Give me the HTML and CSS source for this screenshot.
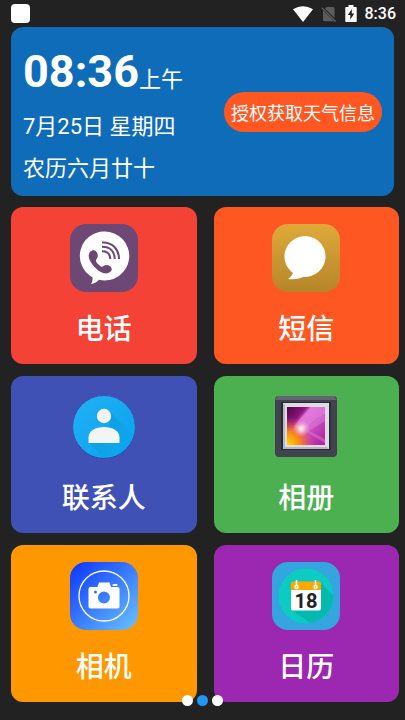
FILE: index.html
```html
<!DOCTYPE html>
<html lang="zh-CN">
<head>
<meta charset="utf-8">
<meta name="viewport" content="width=device-width, initial-scale=1">
<title>桌面</title>
<link rel="stylesheet" href="styles.css">
</head>
<body>
<header class="status">
  <span class="notice"></span>
  <div class="signals">
    <svg width="20" height="16" viewBox="0 0 20 16"><path d="M0 3.2Q10-2.6 20 3.2L10 16Z" fill="#fff"/></svg>
    <svg width="16" height="16" viewBox="0 0 16 16"><path d="M5.5 1H12a1.5 1.5 0 0 1 1.5 1.5V12L3.8 2.6ZM2 4.5 13 15.3H3.5A1.5 1.5 0 0 1 2 13.8Z" fill="#5c5c5c"/><path d="M.8 1.8 14.6 15.6" stroke="#5c5c5c" stroke-width="1.4"/></svg>
    <svg width="12" height="17" viewBox="0 0 12 17"><path d="M3.5 0h5v2H11a.7.7 0 0 1 .7.7v13.6a.7.7 0 0 1-.7.7H1a.7.7 0 0 1-.7-.7V2.700A.7.7 0 0 1 1 2h2.500Z" fill="#fff"/><path d="M6.800 4 2.800 10h2.500v4.500L9.300 8.500H6.800Z" fill="#222"/></svg>
    <span class="clock">8:36</span>
  </div>
</header>
<main>
  <section class="summary">
    <div class="date">
      <div class="time"><strong>08:36</strong>上午</div>
      <div>7月25日 星期四</div>
      <div>农历六月廿十</div>
    </div>
    <button class="weather" type="button">授权获取天气信息</button>
  </section>
  <nav class="apps">
    <button class="app phone" type="button">
      <svg class="icon" viewBox="0 0 68 68"><rect width="68" height="68" rx="16" fill="#6d4875"/><path d="M34 7.500a24.500 24.500 0 1 1-5 48.300C27 58 24.500 59.500 21 60c1.300-2 1.700-4 1.600-6.500A24.500 24.500 0 0 1 34 7.500Z" fill="#fff"/><path d="M20.500 27.500c2-1.800 4.700-1.500 6.200.6 1.400 2.300 1.600 5-.1 7-1.300 1.500-.5 3 1.400 5 2 2.200 3.800 3.300 5.500 2 2.300-1.800 5.700-1 7.500 1.200 1.300 1.800.8 3.500-.8 4.700-4.500 3.300-11 .3-15.700-5-4.700-5.200-8-11.300-4-15.500Z" fill="#6d4875"/><g fill="none" stroke="#6d4875" stroke-width="2"><path d="M32 18.500c10-.5 17 6.500 17 16.500"/><path d="M32 22.800c8 0 12.700 4.500 12.700 12.200"/><path d="M32 27.300c5 0 8.200 2.700 8.300 7.700"/></g></svg>
      <span>电话</span>
    </button>
    <button class="app sms" type="button">
      <svg class="icon" viewBox="0 0 68 68"><defs><linearGradient id="gold" x2="0" y2="1"><stop stop-color="#dfa93a"/><stop offset="1" stop-color="#b68529"/></linearGradient></defs><rect width="68" height="68" rx="16" fill="url(#gold)"/><path d="M34 12a21 20.500 0 1 1-3 41c-4 2-9 2.500-15 2 2-1.500 4-3.500 5-6A21 20.500 0 0 1 34 12Z" fill="#fff"/></svg>
      <span>短信</span>
    </button>
    <button class="app contacts" type="button">
      <svg class="icon" viewBox="0 0 68 68"><defs><clipPath id="disc"><circle cx="34" cy="34" r="31"/></clipPath><linearGradient id="sky" x2="1" y2="1"><stop stop-color="#22b0f4"/><stop offset="1" stop-color="#08a3ec"/></linearGradient><linearGradient id="fade" x2="1" y2="1"><stop stop-color="#0279b8" stop-opacity=".4"/><stop offset=".7" stop-color="#0279b8" stop-opacity="0"/></linearGradient></defs><circle cx="34" cy="34.600" r="31" fill="#2a3a8b"/><circle cx="34" cy="34" r="31" fill="url(#sky)"/><path clip-path="url(#disc)" d="m39 18 28 28v22H37L19 50h27l-7-18Z" fill="url(#fade)"/><circle cx="34" cy="23" r="7.200" fill="#f2f4f5"/><path d="M18.500 50v-5.500c0-6.500 7-10.500 15.500-10.500s15.500 4 15.500 10.500V50Z" fill="#f2f4f5"/></svg>
      <span>联系人</span>
    </button>
    <button class="app album" type="button">
      <svg class="icon" viewBox="0 0 68 68"><defs><linearGradient id="photo" x2="1" y2=".8"><stop stop-color="#4c0647"/><stop offset=".3" stop-color="#8c147c"/><stop offset=".42" stop-color="#e36cc9"/><stop offset=".65" stop-color="#c652c6"/><stop offset="1" stop-color="#b7269d"/></linearGradient><radialGradient id="sun" cx="0" cy="1" r=".75"><stop stop-color="#ffd900"/><stop offset=".45" stop-color="#f78b13"/><stop offset="1" stop-color="#f0357a" stop-opacity="0"/></radialGradient><radialGradient id="glow" cx=".38" cy=".57" r=".22"><stop stop-color="#fff"/><stop offset="1" stop-color="#ffc4d8" stop-opacity="0"/></radialGradient></defs><rect x="3" y="3" width="62" height="61" rx="4" fill="#40424d"/><path d="M6 3h56l3 4H3Z" fill="#636570"/><path d="M9 9h50v48H9Z" fill="#292b34"/><rect x="11" y="10" width="46" height="46" fill="#dddce2"/><path d="M11 56V10l2 2v42h42l2 2Z" fill="#b7b7c0"/><rect x="15" y="14" width="38" height="38" fill="url(#photo)"/><path d="M38 14h15v6C43 27 38 30 35 36c-3-3-9-2-14 2 3-10 10-15 17-24Z" fill="#e17bdc" opacity=".8"/><path d="M36 34 53 19v9L37 38l16 8v4L33 38Z" fill="#e38be0" opacity=".4"/><rect x="15" y="14" width="38" height="38" fill="url(#sun)"/><rect x="15" y="14" width="38" height="38" fill="url(#glow)"/></svg>
      <span>相册</span>
    </button>
    <button class="app camera" type="button">
      <svg class="icon" viewBox="0 0 68 68"><defs><linearGradient id="blue" x2="1" y2="1"><stop stop-color="#0a34ff"/><stop offset="1" stop-color="#6ac4ff"/></linearGradient></defs><rect width="68" height="68" rx="16" fill="url(#blue)"/><circle cx="34" cy="34" r="25" fill="none" stroke="#fff" stroke-width="1.300"/><path fill-rule="evenodd" d="M20 25h7.500l1.500-4.500h10.500L41 25h6.500q2 0 2 2v17.500q0 2-2 2H20.500q-2 0-2-2V27q0-2 1.500-2ZM34 29.500a6 6 0 1 0 0 12 6 6 0 0 0 0-12ZM25.500 28.500a1.500 1.500 0 1 0 0 3 1.500 1.500 0 0 0 0-3Z" fill="#fff"/><rect x="42.500" y="22" width="5" height="2" rx="1" fill="#fff"/></svg>
      <span>相机</span>
    </button>
    <button class="app calendar" type="button">
      <svg class="icon" viewBox="0 0 68 68"><rect width="68" height="68" rx="16" fill="#34a5df"/><circle cx="34" cy="34" r="27.500" fill="#0bccc3"/><path d="m49 21 12.500 12.500A27.500 27.500 0 0 1 38 61L20 48Z" fill="#05b9b1"/><path d="M19 27h30v19.500q0 2-2 2H21q-2 0-2-2Z" fill="#fff"/><path d="M21 19.500h26q2 0 2 2V28H19v-6.500q0-2 2-2Z" fill="#ffa800"/><g fill="none" stroke="#fff" stroke-width="1.500"><circle cx="24.500" cy="25" r="1.500"/><path d="M24.500 18v6"/><circle cx="43.500" cy="25" r="1.500"/><path d="M43.500 18v6"/></g><text x="34" y="46" text-anchor="middle" class="day">18</text></svg>
      <span>日历</span>
    </button>
  </nav>
</main>
<div class="pages">
  <button type="button" aria-label="第一页"></button>
  <button type="button" aria-label="第二页" class="current"></button>
  <button type="button" aria-label="第三页"></button>
</div>
</body>
</html>
```
FILE: styles.css
```css
* {
  box-sizing: border-box;
}

body {
  margin: 0;
  background: #222;
  color: #fff;
  font-family: Roboto, "Noto Sans CJK SC", sans-serif;
}

button {
  margin: 0;
  border: 0;
  color: inherit;
  font-family: inherit;
}

svg {
  display: block;
}

.status {
  display: flex;
  justify-content: space-between;
  align-items: center;
  height: 27px;
  padding: 0 9px 0 11px;
}

.notice {
  width: 19px;
  height: 19px;
  border-radius: 4px;
  background: #fff;
}

.signals {
  display: flex;
  align-items: center;
  gap: 8px;
}

.clock {
  font-size: 16px;
  font-weight: 500;
  line-height: 27px;
}

.summary {
  display: flex;
  justify-content: space-between;
  align-items: center;
  margin: 0 11px;
  padding: 0 12px;
  border-radius: 12px;
  background: #0f6cb8;
}

.date {
  padding: 12px 0 6px;
  font-size: 22px;
  line-height: 42px;
}

.time {
  margin-bottom: 2px;
}

.time strong {
  font-size: 45px;
  line-height: 65px;
}

.weather {
  height: 40px;
  padding: 0 7px;
  border-radius: 20px;
  background: #ff5722;
  font-size: 18px;
}

.apps {
  display: grid;
  grid-template-columns: 1fr 1fr;
  gap: 12px 17px;
  padding: 11px 6px 0 11px;
}

.app {
  display: flex;
  flex-direction: column;
  align-items: center;
  gap: 18px;
  padding: 17px 0 14px;
  border-radius: 12px;
  font-size: 28px;
  font-weight: 500;
  line-height: 40px;
}

.icon {
  width: 68px;
  height: 68px;
}

.phone { background: #f44336; }
.sms { background: #ff5722; }
.contacts { background: #3f51b5; }
.album { background: #4caf50; }
.camera { background: #ff9800; }
.calendar { background: #9c27b0; }

.day {
  fill: #222;
  font: bold 20px Roboto, sans-serif;
}

.pages {
  position: fixed;
  right: 0;
  bottom: 14px;
  left: 0;
  display: flex;
  justify-content: center;
  gap: 4px;
}

.pages button {
  width: 11px;
  height: 11px;
  padding: 0;
  border-radius: 50%;
  background: #fff;
}

.pages .current {
  background: #2196f3;
}
```
